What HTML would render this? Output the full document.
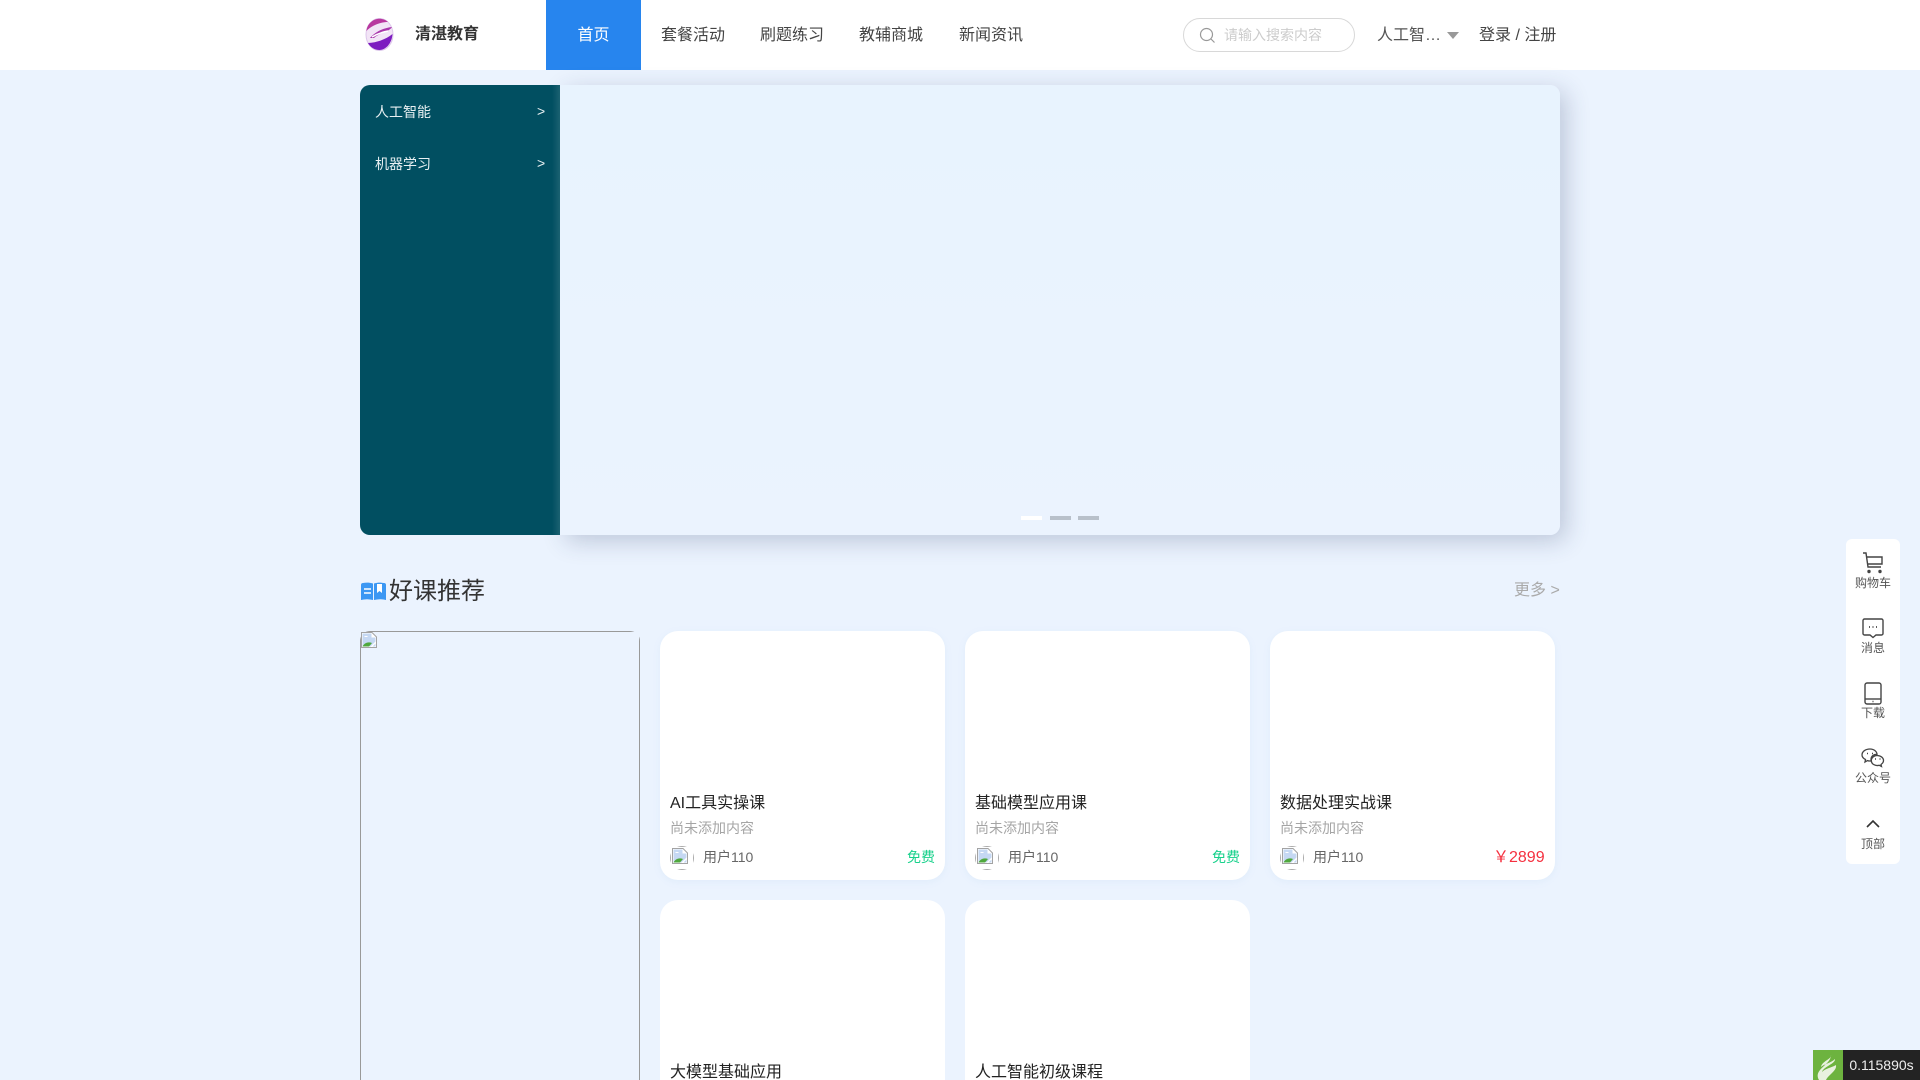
<!DOCTYPE html>
<html lang="zh"><head><meta charset="utf-8"><title>清湛教育</title>
<style>
*{box-sizing:border-box;margin:0;padding:0}
html,body{width:1920px;height:1080px;overflow:hidden}
body{background:#ebf3fe;font-family:"Liberation Sans","WenQuanYi Zen Hei","Noto Sans CJK SC",sans-serif;color:#333}
#w{position:absolute;left:0;top:0;width:1920px;height:1080px;overflow:hidden}
.a{position:absolute;white-space:nowrap}
.hd{left:0;top:0;width:1920px;height:70px;background:#fff}
.nav{top:1px;height:69px;line-height:70px;font-size:16px;color:#444}
.side{left:360px;top:85px;width:200px;height:450px;background:#014f61;border-radius:10px 0 0 10px}
.side:after{content:"";position:absolute;right:0;top:0;width:8px;height:100%;background:linear-gradient(90deg,rgba(255,255,255,0),rgba(255,255,255,.1))}
.si{left:375px;font-size:14px;color:#e8f0f2;line-height:20px}
.ban{left:560px;top:85px;width:1000px;height:450px;background:linear-gradient(#e8f3fe,#ebf3fe);border-radius:0 10px 10px 0;box-shadow:6px 6px 24px rgba(40,60,100,.24)}
.dot{top:516px;width:21px;height:4px;background:#b8c0ca}
.card{width:285px;height:249px;background:#fff;border-radius:18px;box-shadow:0 2px 8px rgba(120,160,220,.08)}
.t{font-size:16px;line-height:22px;color:#222}
.d{font-size:14px;line-height:20px;color:#a5a5a5}
.u{font-size:14px;line-height:20px;color:#666}
.g{font-size:14px;line-height:20px;color:#17d18b}
.av{top:846px;width:24px;height:24px;border-radius:50%;overflow:hidden}
.av i{display:block;width:24px;height:24px;border:1px solid #aaa}
.rb{left:1846px;top:539px;width:54px;height:325px;background:#fff;border-radius:6px}
.rt{left:1846px;width:54px;text-align:center;font-size:12px;line-height:16px;color:#555}
</style></head><body><div id="w">
<svg width="0" height="0" style="position:absolute"><defs>
<symbol id="bk" viewBox="0 0 16 16"><path d="M.5.5H11L15.500 5v10.500H.5z" fill="#fff" stroke="#a3a3a3"/><path d="M1.500 1.500h9v4h4V14.500h-13z" fill="#c5d8f3"/><path d="M3 5c1-1.500 3-1.500 4 0z" fill="#fff"/><path d="M1.500 14.500c2-4 6-5 9.500-3.500l-3 3.500z" fill="#4fa83d"/><path d="M9 15l6-6v2l-4 4z" fill="#fff"/></symbol>
</defs></svg>
<div class="a hd"></div>
<svg class="a" style="left:365px;top:18px" width="29" height="33" viewBox="0 0 29 33"><ellipse cx="14.500" cy="16.500" rx="13.500" ry="16" fill="#f2e4f6" stroke="#dcc6ea" stroke-width="1"/><path d="M1.500 13C2 6 8 .8 14.500 .8 18 .8 21 2 23 4 15 4 6 8 1.500 13z" fill="#b8379f"/><path d="M5 20C10 14 18 10 27 9 24 14 14 15 9 20z" fill="#a936ac"/><path d="M3 25c7 0 17-3 24.500-9C27 25 21 32 14.500 32 9.500 32 5 29 3 25z" fill="#7d1cc0"/><path d="M7 19c5-3 11-5 16-6" fill="none" stroke="#fff" stroke-width="1.600"/></svg>
<div class="a" style="left:415px;top:23px;font-size:16px;line-height:24px;font-weight:bold;color:#333">清湛教育</div>
<div class="a" style="left:546px;top:0;width:95px;height:70px;background:#2785ee;color:#fff;text-align:center;line-height:70px;font-size:16px;padding-top:1px">首页</div>
<div class="a nav" style="left:661px">套餐活动</div>
<div class="a nav" style="left:760px">刷题练习</div>
<div class="a nav" style="left:859px">教辅商城</div>
<div class="a nav" style="left:959px">新闻资讯</div>
<div class="a" style="left:1183px;top:18px;width:172px;height:34px;border:1px solid #d8d8d8;border-radius:17px"></div>
<svg class="a" style="left:1199px;top:27px" width="17" height="17" viewBox="0 0 17 17" fill="none" stroke="#999" stroke-width="1.200"><circle cx="7.500" cy="7.500" r="6"/><path d="M12 12l3.500 3.500"/></svg>
<div class="a" style="left:1224px;top:25px;font-size:14px;line-height:20px;color:#ccc">请输入搜索内容</div>
<div class="a" style="left:1377px;top:25px;font-size:16px;line-height:22px;color:#555">人工智…</div>
<div class="a" style="left:1447px;top:32px;width:0;height:0;border:6px solid transparent;border-bottom:0;border-top:7px solid #999"></div>
<div class="a" style="left:1479px;top:25px;font-size:16px;line-height:22px;color:#444">登录 / 注册</div>

<div class="a ban"></div>
<div class="a side"></div>
<div class="a si" style="top:102px">人工智能</div><div class="a si" style="top:101px;left:537px">&gt;</div>
<div class="a si" style="top:154px">机器学习</div><div class="a si" style="top:153px;left:537px">&gt;</div>
<div class="a dot" style="left:1021px;background:#fff"></div><div class="a dot" style="left:1050px"></div><div class="a dot" style="left:1078px"></div>

<svg class="a" style="left:361px;top:582px" width="25" height="18" viewBox="0 0 25 18"><path d="M0 3a2 2 0 0 1 2-2c3-.5 7-.5 10 .5V18c-4-1-8-1-12 0z" fill="#3b97f3"/><path d="M13 1.500c3-1 7-1 10-.5a2 2 0 0 1 2 2v15c-4-1-8-1-12 0z" fill="#3b97f3"/><path d="M3 7h7M3 11h7" stroke="#fff" stroke-width="1.600"/><path d="M16 2h5v9l-2.500-2-2.500 2z" fill="#fff"/></svg>
<div class="a" style="left:389px;top:575px;font-size:24px;line-height:34px;color:#333">好课推荐</div>
<div class="a" style="left:1514px;top:581px;font-size:16px;line-height:20px;color:#aaa">更多 &gt;</div>

<div class="a" style="left:360px;top:631px;width:280px;height:449px;border-radius:10px 10px 0 0;overflow:hidden"><div style="width:280px;height:470px;border:1px solid #999"></div></div>
<svg class="a" style="left:361px;top:632px" width="16" height="16"><use href="#bk"/></svg>

<div class="a card" style="left:660px;top:631px"></div>
<div class="a t" style="left:670px;top:793px">AI工具实操课</div><div class="a d" style="left:670px;top:818px">尚未添加内容</div>
<div class="a av" style="left:670px"><i></i></div><svg class="a" style="left:672px;top:848px" width="16" height="16"><use href="#bk"/></svg><div class="a u" style="left:703px;top:847px">用户110</div><div class="a g" style="left:907px;top:847px">免费</div>

<div class="a card" style="left:965px;top:631px"></div>
<div class="a t" style="left:975px;top:793px">基础模型应用课</div><div class="a d" style="left:975px;top:818px">尚未添加内容</div>
<div class="a av" style="left:975px"><i></i></div><svg class="a" style="left:977px;top:848px" width="16" height="16"><use href="#bk"/></svg><div class="a u" style="left:1008px;top:847px">用户110</div><div class="a g" style="left:1212px;top:847px">免费</div>

<div class="a card" style="left:1270px;top:631px"></div>
<div class="a t" style="left:1280px;top:793px">数据处理实战课</div><div class="a d" style="left:1280px;top:818px">尚未添加内容</div>
<div class="a av" style="left:1280px"><i></i></div><svg class="a" style="left:1282px;top:848px" width="16" height="16"><use href="#bk"/></svg><div class="a u" style="left:1313px;top:847px">用户110</div><div class="a" style="left:1493px;top:848px;font-size:16px;line-height:20px;color:#f5303f">￥2899</div>

<div class="a" style="left:660px;top:900px;width:285px;height:180px;background:#fff;border-radius:18px 18px 0 0"></div>
<div class="a t" style="left:670px;top:1062px;height:18px;overflow:hidden">大模型基础应用</div>
<div class="a" style="left:965px;top:900px;width:285px;height:180px;background:#fff;border-radius:18px 18px 0 0"></div>
<div class="a t" style="left:975px;top:1062px;height:18px;overflow:hidden">人工智能初级课程</div>

<div class="a rb"></div>
<svg class="a" style="left:1862px;top:552px" width="22" height="22" viewBox="0 0 22 22" fill="none" stroke="#444" stroke-width="1.400"><path d="M1 1h3l2 14h13"/><path d="M5 5h15v7H6"/><circle cx="7" cy="19.500" r="1" fill="#444"/><circle cx="18" cy="19.500" r="1" fill="#444"/></svg>
<div class="a rt" style="top:575px">购物车</div>
<svg class="a" style="left:1862px;top:618px" width="22" height="22" viewBox="0 0 22 22" fill="none" stroke="#444" stroke-width="1.400"><path d="M2.500 1h17a1.500 1.500 0 0 1 1.500 1.500v13a1.500 1.500 0 0 1-1.500 1.500H14l-3 2.500L8 17H2.500A1.500 1.500 0 0 1 1 15.500v-13A1.500 1.500 0 0 1 2.500 1z"/><path d="M7 9h1M10.500 9h1M14 9h1" stroke-width="1.800"/></svg>
<div class="a rt" style="top:640px">消息</div>
<svg class="a" style="left:1864px;top:682px" width="18" height="23" viewBox="0 0 18 23" fill="none" stroke="#444" stroke-width="1.400"><rect x="1" y="1" width="16" height="21" rx="2"/><path d="M1 17h16"/><path d="M8.500 19.500h1" stroke-width="1.600"/></svg>
<div class="a rt" style="top:705px">下载</div>
<svg class="a" style="left:1861px;top:748px" width="24" height="21" viewBox="0 0 24 21" fill="none" stroke="#444" stroke-width="1.300"><path d="M9 1c4 0 7 2.500 7 5.500-3-.5-6 1.500-6 5 0 .5 0 1 .2 1.500H9c-1 0-2-.2-2.500-.4L4 14l.5-2.500C2.500 10.500 1 8.800 1 7c0-3.500 3.500-6 8-6z"/><path d="M16 7.500c3.500 0 6.500 2.200 6.500 5 0 1.600-1 3-2.500 4l.5 2-2.200-1.200c-2.800.8-8-.5-8-4.800 0-2.800 2.700-5 5.700-5z"/><path d="M6 5.500h1M11 5.500h1M14 11h1M18.500 11h1" stroke-width="1.600"/></svg>
<div class="a rt" style="top:770px">公众号</div>
<svg class="a" style="left:1866px;top:819px" width="14" height="10" viewBox="0 0 14 10" fill="none" stroke="#333" stroke-width="1.600"><path d="M1 8l6-6 6 6"/></svg>
<div class="a rt" style="top:836px">顶部</div>

<div class="a" style="left:1813px;top:1050px;width:30px;height:30px;background:#6db33f"></div>
<svg class="a" style="left:1813px;top:1050px" width="30" height="30" viewBox="0 0 30 30"><path d="M18 5c1 4-9 6-10 12 3-3 10-4 14-8 .5 5-11 7-13 13 4-4 9-4 14-7 1 6-7 9-10 15H6c-4-7 2-11 7-16 2-2 5-5 5-9z" fill="#e8f1df"/></svg>
<div class="a" style="left:1843px;top:1050px;width:77px;height:30px;background:#232323;color:#eee;font-size:14px;line-height:30px;text-align:center">0.115890s</div>
</div></body></html>
